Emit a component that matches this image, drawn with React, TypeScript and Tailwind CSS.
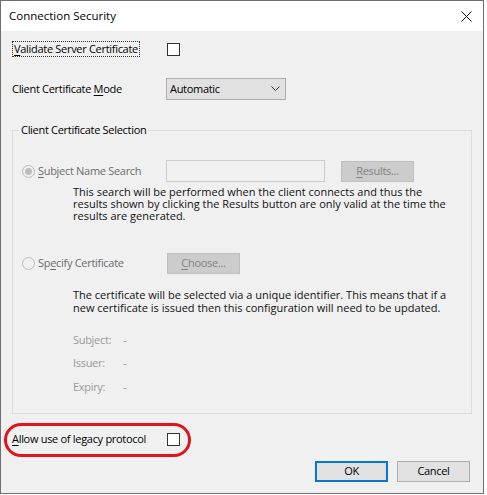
import React from "react";

const font = { fontFamily: '"Open Sans", "Noto Sans", sans-serif' };

function Checkbox() {
  return <div className="w-[13px] h-[13px] border border-[#333333] bg-white shrink-0" />;
}

function Radio({ checked }: { checked?: boolean }) {
  return (
    <div className="w-[13px] h-[13px] rounded-full border border-[#bcbcbc] bg-[#f0f0f0] flex items-center justify-center shrink-0">
      {checked && <div className="w-[7px] h-[7px] rounded-full bg-[#bcbcbc]" />}
    </div>
  );
}

function DisabledButton({ mnemonic, rest }: { mnemonic: string; rest: string }) {
  return (
    <div className="w-[73px] h-[21px] bg-[#cccccc] border border-[#bfbfbf] flex items-center justify-center text-[#838383]">
      <span>
        <span className="underline underline-offset-2">{mnemonic}</span>
        {rest}
      </span>
    </div>
  );
}

export default function App() {
  return (
    <div className="w-[487px] h-[495px] bg-white text-[11px] text-black" style={font}>
      <div className="w-[484px] h-[494px] border border-[#6f6f6f] flex flex-col">
        {/* Title bar */}
        <div className="h-[30px] bg-white flex items-center justify-between pl-[8px] pr-[10px] shrink-0">
          <span className="text-[11.5px]">Connection Security</span>
          <svg width="11" height="11" viewBox="0 0 11 11" className="mr-[1px]">
            <path d="M0.5 0.5 L10.5 10.5 M10.5 0.5 L0.5 10.5" stroke="#111" strokeWidth="1" />
          </svg>
        </div>

        {/* Body */}
        <div className="relative flex-1 bg-[#f0f0f0] pl-[11px] pr-[11px] flex flex-col tracking-[-0.3px]">
          <div className="mt-[10px] h-[16px] flex items-center">
            <div className="w-[155px]">
              <span className="border border-dotted border-[#333] px-[1px] leading-[14px] inline-block">
                <span className="underline underline-offset-2">V</span>alidate Server Certificate
              </span>
            </div>
            <Checkbox />
          </div>

          <div className="mt-[21px] h-[22px] flex items-center">
            <div className="w-[154px]">
              Client Certificate <span className="underline underline-offset-2">M</span>ode
            </div>
            <div className="w-[120px] h-[22px] bg-[#e1e1e1] border border-[#adadad] flex items-center justify-between pl-[3px] pr-[5px]">
              <span>Automatic</span>
              <svg width="9" height="6" viewBox="0 0 9 6">
                <path d="M0.5 0.5 L4.5 4.5 L8.5 0.5" stroke="#333" strokeWidth="1" fill="none" />
              </svg>
            </div>
          </div>

          <fieldset className="mt-[22px] h-[292px] border border-[#dcdcdc] pl-[9px]">
            <legend className="-ml-[3px] px-[2px] leading-[16px]">Client Certificate Selection</legend>

            <div className="mt-[22px] h-[22px] flex items-center">
              <div className="w-[144px] flex items-center gap-[3px] text-[#6d6d6d]">
                <Radio checked />
                <span>
                  <span className="underline underline-offset-2">S</span>ubject Name Search
                </span>
              </div>
              <div className="w-[159px] h-[22px] border border-[#cccccc] bg-[#f0f0f0]" />
              <div className="ml-[16px]">
                <DisabledButton mnemonic="R" rest="esults..." />
              </div>
            </div>

            <div className="mt-[3.5px] pl-[51px] leading-[12px] text-[#111] tracking-normal">
              This search will be performed when the client connects and thus the
              <br />
              results shown by clicking the Results button are only valid at the time the
              <br />
              results are generated.
            </div>

            <div className="mt-[30.5px] h-[22px] flex items-center">
              <div className="w-[145px] flex items-center gap-[3px] text-[#6d6d6d]">
                <Radio />
                <span>
                  Sp<span className="underline underline-offset-2">e</span>cify Certificate
                </span>
              </div>
              <DisabledButton mnemonic="C" rest="hoose..." />
            </div>

            <div className="mt-[14px] pl-[51px] leading-[13px] text-[#111] tracking-normal">
              The certificate will be selected via a unique identifier. This means that if a
              <br />
              new certificate is issued then this configuration will need to be updated.
            </div>

            <div className="mt-[14px] pl-[51px] text-[#9a9a9a]">
              {["Subject:", "Issuer:", "Expiry:"].map((l) => (
                <div key={l} className="h-[23.5px] flex items-center">
                  <span className="w-[50px]">{l}</span>
                  <span>-</span>
                </div>
              ))}
            </div>
          </fieldset>

          <div className="mt-[17px] h-[16px] flex items-center">
            <div className="w-[155px]">
              <span className="underline underline-offset-2">A</span>llow use of legacy protocol
            </div>
            <Checkbox />
          </div>

          <div className="mt-[14px] flex justify-end gap-[9px] pr-[2px]">
            <div className="w-[73px] h-[21px] bg-[#e1e1e1] border-2 border-[#0078d7] flex items-center justify-center">
              OK
            </div>
            <div className="w-[73px] h-[21px] bg-[#e1e1e1] border border-[#adadad] flex items-center justify-center">
              Cancel
            </div>
          </div>

          {/* red highlight */}
          <div className="absolute left-[3px] top-[392px] w-[187px] h-[34px] border-[3px] border-[#e0141e] rounded-[17px]" />
        </div>
      </div>
    </div>
  );
}
